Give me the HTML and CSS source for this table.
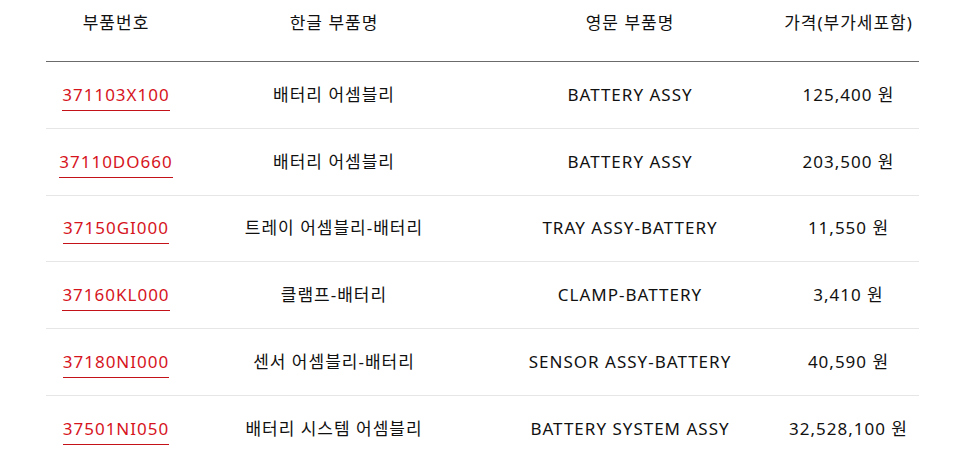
FILE: index.html
```html
<!DOCTYPE html>
<html lang="ko">
<head>
<meta charset="utf-8">
<link rel="stylesheet" href="styles.css">
</head>
<body>
<div class="wrap">
<table class="parts">
  <colgroup>
    <col class="c1"><col class="c2"><col class="c3"><col class="c4">
  </colgroup>
  <thead>
    <tr><th>부품번호</th><th>한글 부품명</th><th>영문 부품명</th><th>가격(부가세포함)</th></tr>
  </thead>
  <tbody>
    <tr><td><a class="pn" href="#">371103X100</a></td><td>배터리 어셈블리</td><td>BATTERY ASSY</td><td>125,400 원</td></tr>
    <tr><td><a class="pn" href="#">37110DO660</a></td><td>배터리 어셈블리</td><td>BATTERY ASSY</td><td>203,500 원</td></tr>
    <tr><td><a class="pn" href="#">37150GI000</a></td><td>트레이 어셈블리-배터리</td><td>TRAY ASSY-BATTERY</td><td>11,550 원</td></tr>
    <tr><td><a class="pn" href="#">37160KL000</a></td><td>클램프-배터리</td><td>CLAMP-BATTERY</td><td>3,410 원</td></tr>
    <tr><td><a class="pn" href="#">37180NI000</a></td><td>센서 어셈블리-배터리</td><td>SENSOR ASSY-BATTERY</td><td>40,590 원</td></tr>
    <tr><td><a class="pn" href="#">37501NI050</a></td><td>배터리 시스템 어셈블리</td><td>BATTERY SYSTEM ASSY</td><td>32,528,100 원</td></tr>
  </tbody>
</table>
</div>
</body>
</html>
```
FILE: styles.css
```css
html, body {
  margin: 0;
  padding: 0;
  background: #fff;
}
body {
  font-family: "Noto Sans", "Noto Sans CJK KR", sans-serif;
  font-size: 17px;
  letter-spacing: 1px;
  color: #111;
}
.wrap {
  padding: 0 36px 0 46px;
}
.parts {
  width: 873px;
  border-collapse: collapse;
  table-layout: fixed;
}
.c1 { width: 140px; }
.c2 { width: 296px; }
.c3 { width: 296px; }
.c4 { width: 141px; }
.parts th {
  font-weight: 400;
  line-height: 24px;
  padding: 11px 0 26px;
  text-align: center;
  border-bottom: 1px solid #6b6b6b;
}
.parts td {
  height: 65.75px;
  padding: 0;
  line-height: 24px;
  text-align: center;
  border-bottom: 1px solid #e6e6e6;
  vertical-align: middle;
}
.pn {
  display: inline-block;
  color: #d6141d;
  text-decoration: none;
  border-bottom: 1px solid #c4121b;
  padding: 4px 0 3px;
  line-height: 24px;
}
```
